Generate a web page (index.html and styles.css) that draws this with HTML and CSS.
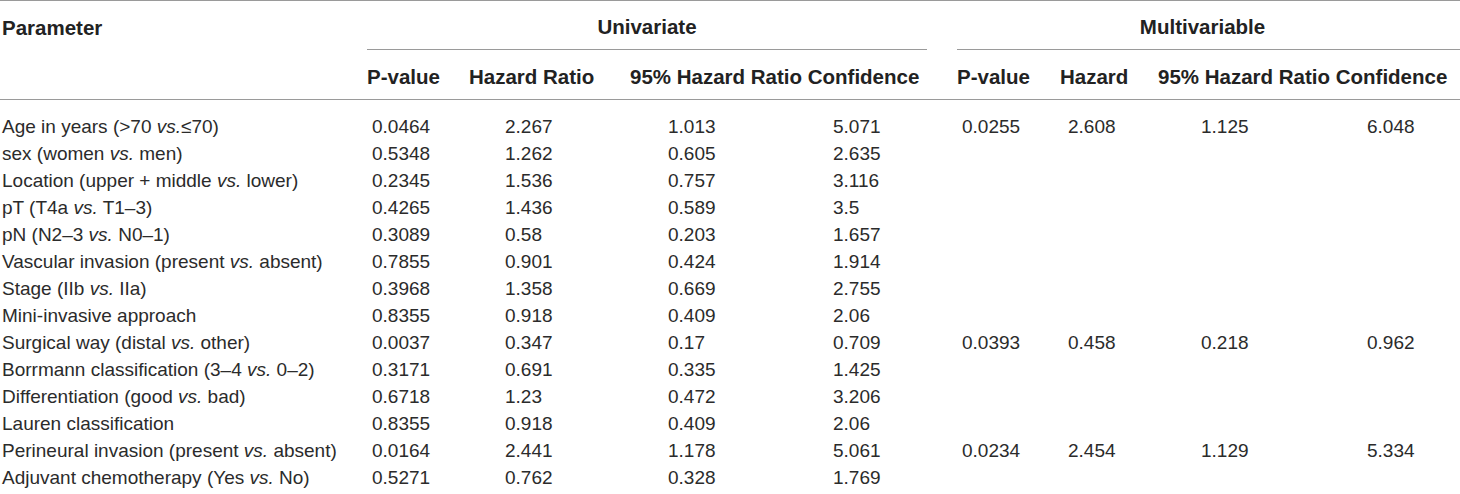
FILE: index.html
```html
<!DOCTYPE html>
<html lang="en">
<head>
<meta charset="utf-8">
<title>Cox regression table</title>
<link rel="stylesheet" href="styles.css">
</head>
<body>
<div class="table">
  <div class="head1">
    <div class="h-param">Parameter</div>
    <div class="group">Univariate</div>
    <div class="group group-multi">Multivariable</div>
  </div>
  <div class="head2">
    <div></div>
    <div>P-value</div>
    <div>Hazard Ratio</div>
    <div>95% Hazard Ratio Confidence</div>
    <div>P-value</div>
    <div>Hazard</div>
    <div>95% Hazard Ratio Confidence</div>
  </div>
  <div class="body">
    <div class="row"><div class="param">Age in years (&gt;70 <i>vs.</i>≤70)</div><div>0.0464</div><div>2.267</div><div>1.013</div><div>5.071</div><div>0.0255</div><div>2.608</div><div>1.125</div><div>6.048</div></div>
    <div class="row"><div class="param">sex (women <i>vs.</i> men)</div><div>0.5348</div><div>1.262</div><div>0.605</div><div>2.635</div><div></div><div></div><div></div><div></div></div>
    <div class="row"><div class="param">Location (upper + middle <i>vs.</i> lower)</div><div>0.2345</div><div>1.536</div><div>0.757</div><div>3.116</div><div></div><div></div><div></div><div></div></div>
    <div class="row"><div class="param">pT (T4a <i>vs.</i> T1–3)</div><div>0.4265</div><div>1.436</div><div>0.589</div><div>3.5</div><div></div><div></div><div></div><div></div></div>
    <div class="row"><div class="param">pN (N2–3 <i>vs.</i> N0–1)</div><div>0.3089</div><div>0.58</div><div>0.203</div><div>1.657</div><div></div><div></div><div></div><div></div></div>
    <div class="row"><div class="param">Vascular invasion (present <i>vs.</i> absent)</div><div>0.7855</div><div>0.901</div><div>0.424</div><div>1.914</div><div></div><div></div><div></div><div></div></div>
    <div class="row"><div class="param">Stage (IIb <i>vs.</i> IIa)</div><div>0.3968</div><div>1.358</div><div>0.669</div><div>2.755</div><div></div><div></div><div></div><div></div></div>
    <div class="row"><div class="param">Mini-invasive approach</div><div>0.8355</div><div>0.918</div><div>0.409</div><div>2.06</div><div></div><div></div><div></div><div></div></div>
    <div class="row"><div class="param">Surgical way (distal <i>vs.</i> other)</div><div>0.0037</div><div>0.347</div><div>0.17</div><div>0.709</div><div>0.0393</div><div>0.458</div><div>0.218</div><div>0.962</div></div>
    <div class="row"><div class="param">Borrmann classification (3–4 <i>vs.</i> 0–2)</div><div>0.3171</div><div>0.691</div><div>0.335</div><div>1.425</div><div></div><div></div><div></div><div></div></div>
    <div class="row"><div class="param">Differentiation (good <i>vs.</i> bad)</div><div>0.6718</div><div>1.23</div><div>0.472</div><div>3.206</div><div></div><div></div><div></div><div></div></div>
    <div class="row"><div class="param">Lauren classification</div><div>0.8355</div><div>0.918</div><div>0.409</div><div>2.06</div><div></div><div></div><div></div><div></div></div>
    <div class="row"><div class="param">Perineural invasion (present <i>vs.</i> absent)</div><div>0.0164</div><div>2.441</div><div>1.178</div><div>5.061</div><div>0.0234</div><div>2.454</div><div>1.129</div><div>5.334</div></div>
    <div class="row"><div class="param">Adjuvant chemotherapy (Yes <i>vs.</i> No)</div><div>0.5271</div><div>0.762</div><div>0.328</div><div>1.769</div><div></div><div></div><div></div><div></div></div>
  </div>
</div>
</body>
</html>
```
FILE: styles.css
```css
html, body {
  margin: 0;
  padding: 0;
  background: #ffffff;
}

body {
  font-family: "Liberation Sans", Arial, Helvetica, sans-serif;
  font-size: 19px;
  color: #2b2b2b;
}

.table {
  width: 1460px;
  border-top: 1px solid #9a9a9a;
}

.head1 {
  display: grid;
  grid-template-columns: 367px 560px 1fr;
  height: 49px;
  font-weight: bold;
  font-size: 20.5px;
  color: #222222;
}

.h-param {
  padding-left: 2px;
  align-self: center;
  margin-top: 4px;
}

.group {
  border-bottom: 1px solid #9a9a9a;
  display: flex;
  align-items: center;
  justify-content: center;
  padding-top: 4px;
}

.group-multi {
  margin-left: 30px;
  padding-right: 12px;
}

.head2 {
  display: grid;
  grid-template-columns: 367px 102px 161px 327px 103px 98px 1fr;
  height: 49px;
  align-items: center;
  font-weight: bold;
  font-size: 20.5px;
  color: #222222;
  border-bottom: 1px solid #9a9a9a;
  white-space: nowrap;
}

.head2 > div {
  padding-top: 4px;
}

.body {
  padding-top: 13px;
}

.row {
  display: grid;
  grid-template-columns: 372px 133px 163px 165px 129px 106px 133px 166px 1fr;
  height: 27px;
  align-items: center;
  white-space: nowrap;
}

.param {
  padding-left: 2px;
}

.row i {
  font-style: italic;
}
```
